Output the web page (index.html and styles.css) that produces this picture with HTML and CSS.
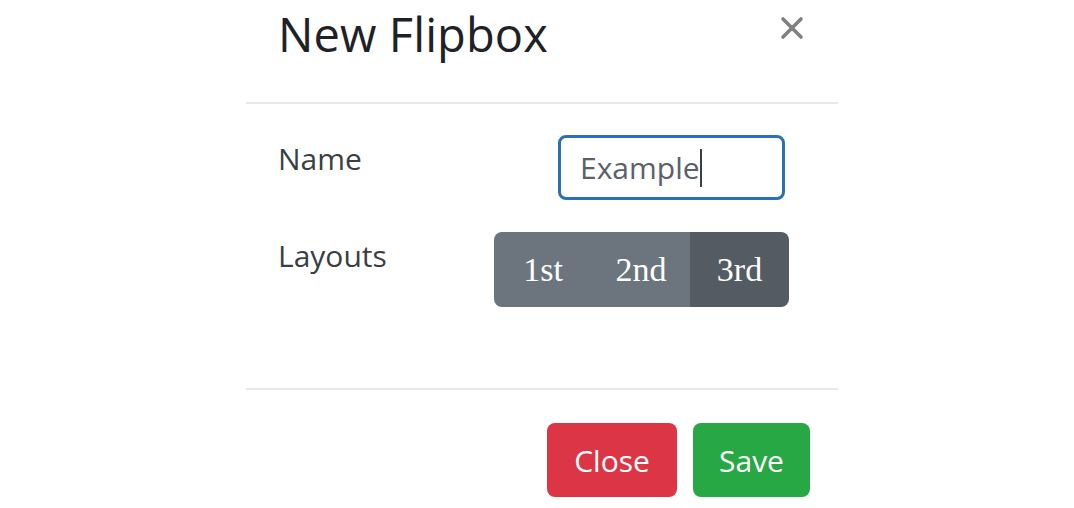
FILE: index.html
```html
<!DOCTYPE html>
<html lang="en">
<head>
<meta charset="utf-8">
<title>New Flipbox</title>
<link rel="stylesheet" href="styles.css">
</head>
<body>
<div class="modal">
  <div class="modal-header">
    <h4 class="modal-title">New Flipbox</h4>
    <button class="close" type="button" aria-label="Close">
      <svg width="24" height="24" viewBox="0 0 24 24"><path d="M3 3 L21 21 M21 3 L3 21" stroke="currentColor" stroke-width="3.6" stroke-linecap="round" fill="none"/></svg>
    </button>
  </div>
  <div class="modal-body">
    <div class="form-row">
      <label class="form-label">Name</label>
      <div class="text-input"><span class="value">Example</span><span class="caret"></span></div>
    </div>
    <div class="form-row">
      <label class="form-label">Layouts</label>
      <div class="btn-group">
        <span class="seg">1st</span>
        <span class="seg">2nd</span>
        <span class="seg active">3rd</span>
      </div>
    </div>
  </div>
  <div class="modal-footer">
    <button class="btn btn-danger" type="button">Close</button>
    <button class="btn btn-success" type="button">Save</button>
  </div>
</div>
</body>
</html>
```

FILE: styles.css
```css
html, body {
  margin: 0;
  padding: 0;
  background: #ffffff;
}

body {
  font-family: "Open Sans", "Noto Sans", sans-serif;
  color: #212529;
  font-size: 32px;
  line-height: 1.5;
}

.modal {
  width: 592px;
  margin-left: 246px;
}

.modal-header {
  height: 102px;
  border-bottom: 2px solid #e6e9ec;
  display: flex;
  align-items: flex-start;
  justify-content: space-between;
  padding: 0 34px 0 32px;
  box-sizing: content-box;
}

.modal-title {
  margin: 6px 0 0 0;
  font-size: 47px;
  font-weight: 500;
  line-height: 1.2;
  color: #1e2226;
  letter-spacing: 0.1px;
}

.close {
  margin-top: 16px;
  padding: 0;
  border: 0;
  background: transparent;
  color: #808080;
  width: 24px;
  height: 24px;
  display: flex;
}

.modal-body {
  padding: 31px 0 81px 32px;
  display: flex;
  flex-direction: column;
  gap: 32px;
}

.form-row {
  display: flex;
  align-items: flex-start;
}

.form-label {
  width: 216px;
  padding-top: 1px;
  font-size: 30px;
  color: #3a3f44;
}

.text-input {
  margin-left: 64px;
  width: 227px;
  height: 65px;
  box-sizing: border-box;
  border: 3px solid #2b6fb6;
  border-radius: 8px;
  display: flex;
  align-items: center;
  padding-left: 19px;
  font-size: 30px;
  color: #5a6168;
}

.caret {
  display: inline-block;
  width: 2px;
  height: 38px;
  background: #3a3f44;
  margin-left: 0;
}

.btn-group {
  display: flex;
  height: 75px;
  border-radius: 8px;
  overflow: hidden;
}

.seg {
  display: flex;
  align-items: center;
  justify-content: center;
  width: 98px;
  background: #6c757d;
  color: #ffffff;
  font-family: "Liberation Serif", "DejaVu Serif", serif;
  font-size: 34px;
}

.seg.active {
  width: 99px;
  background: #545b62;
}

.modal-footer {
  border-top: 2px solid #e6e9ec;
  display: flex;
  justify-content: flex-end;
  gap: 16px;
  padding: 33px 28px 0 0;
}

.btn {
  height: 74px;
  border: 0;
  border-radius: 8px;
  color: #ffffff;
  font-family: "Open Sans", "Noto Sans", sans-serif;
  font-size: 30px;
  padding: 0;
  display: flex;
  align-items: center;
  justify-content: center;
}

.btn-danger {
  width: 130px;
  background: #dc3545;
}

.btn-success {
  width: 117px;
  background: #28a745;
}
```
